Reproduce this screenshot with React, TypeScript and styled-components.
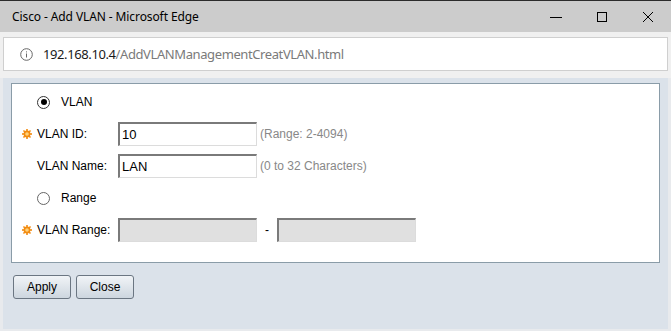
import React from 'react';
import styled, { createGlobalStyle } from 'styled-components';

const GlobalStyle = createGlobalStyle`
  html, body {
    margin: 0;
    padding: 0;
  }
  body {
    font-family: 'Liberation Sans', Arial, sans-serif;
  }
`;

const Star: React.FC = () => (
  <svg width="10" height="10" viewBox="0 0 10 10">
    <g fill="#f28c12">
      <circle cx="5" cy="5" r="3.4" />
      <rect x="4.2" y="0" width="1.6" height="10" />
      <rect x="0" y="4.2" width="10" height="1.6" />
      <rect x="4.2" y="0" width="1.6" height="10" transform="rotate(45 5 5)" />
      <rect x="4.2" y="0" width="1.6" height="10" transform="rotate(-45 5 5)" />
    </g>
    <circle cx="5" cy="5" r="1.8" fill="#ffd27a" />
  </svg>
);

const InfoIcon: React.FC = () => (
  <svg width="13" height="13" viewBox="0 0 13 13">
    <circle cx="6.5" cy="6.5" r="5.8" fill="none" stroke="#666" strokeWidth="1" />
    <rect x="6" y="5.5" width="1" height="4" fill="#666" />
    <rect x="6" y="3.4" width="1" height="1" fill="#666" />
  </svg>
);

const App: React.FC = () => (
  <Window>
    <GlobalStyle />
    <TitleBar>
      <Title>Cisco - Add VLAN - Microsoft Edge</Title>
      <Controls>
        <ControlButton>
          <svg width="12" height="12" viewBox="0 0 12 12">
            <rect x="0" y="6" width="12" height="1" fill="#000" />
          </svg>
        </ControlButton>
        <ControlButton>
          <svg width="12" height="12" viewBox="0 0 12 12">
            <rect x="1.5" y="1.5" width="9" height="9" fill="none" stroke="#000" strokeWidth="1" />
          </svg>
        </ControlButton>
        <ControlButton>
          <svg width="12" height="12" viewBox="0 0 12 12">
            <path d="M1 1 L11 11 M11 1 L1 11" stroke="#000" strokeWidth="1" />
          </svg>
        </ControlButton>
      </Controls>
    </TitleBar>

    <AddressArea>
      <AddressBox>
        <InfoIcon />
        <Url>
          192.168.10.4<UrlPath>/AddVLANManagementCreatVLAN.html</UrlPath>
        </Url>
      </AddressBox>
    </AddressArea>

    <Page>
      <Panel>
        <Row>
          <StarCell />
          <RadioLabel>
            <Radio checked />
            VLAN
          </RadioLabel>
        </Row>
        <Row>
          <StarCell>
            <Star />
          </StarCell>
          <Label>VLAN ID:</Label>
          <TextBox>10</TextBox>
          <Hint>(Range: 2-4094)</Hint>
        </Row>
        <Row>
          <StarCell />
          <Label>VLAN Name:</Label>
          <TextBox>LAN</TextBox>
          <Hint>(0 to 32 Characters)</Hint>
        </Row>
        <Row>
          <StarCell />
          <RadioLabel>
            <Radio />
            Range
          </RadioLabel>
        </Row>
        <Row>
          <StarCell>
            <Star />
          </StarCell>
          <Label>VLAN Range:</Label>
          <TextBox disabled />
          <Dash>-</Dash>
          <TextBox disabled />
        </Row>
      </Panel>

      <ButtonRow>
        <Button>Apply</Button>
        <Button>Close</Button>
      </ButtonRow>
    </Page>
  </Window>
);

export default App;

const Window = styled.div`
  width: 671px;
  height: 331px;
  display: flex;
  flex-direction: column;
  overflow: hidden;
`;

const TitleBar = styled.div`
  height: 31px;
  border-top: 1px solid #2b2b2b;
  background: #cccccc;
  display: flex;
  align-items: center;
  justify-content: space-between;
  padding-left: 12px;
`;

const Title = styled.span`
  font-family: 'Noto Sans', sans-serif;
  font-size: 12px;
  letter-spacing: -0.1px;
  color: #000;
`;

const Controls = styled.div`
  display: flex;
  height: 100%;
`;

const ControlButton = styled.div`
  width: 46px;
  display: flex;
  align-items: center;
  justify-content: center;
  padding-top: 1px;
`;

const AddressArea = styled.div`
  height: 46px;
  background: #f0f0f0;
  padding: 5px 3px 7px 3px;
  box-sizing: border-box;
`;

const AddressBox = styled.div`
  height: 100%;
  box-sizing: border-box;
  background: #fff;
  border: 1px solid #cfcfcf;
  display: flex;
  align-items: center;
  gap: 10px;
  padding-left: 16px;
`;

const Url = styled.span`
  font-family: 'Noto Sans', sans-serif;
  font-size: 13px;
  color: #1a1a1a;
  letter-spacing: -0.4px;
`;

const UrlPath = styled.span`
  color: #7a7a7a;
`;

const Page = styled.div`
  flex: 1;
  background: #dbe2ea;
  border-left: 3px solid #e8eaed;
  border-right: 3px solid #e8eaed;
  border-bottom: 2px solid #e8eaed;
  padding: 5px 0 0 8px;
`;

const Panel = styled.div`
  width: 649px;
  height: 180px;
  box-sizing: border-box;
  background: #fff;
  border: 1px solid #8a9ca8;
  padding: 2px 0 0 10px;
`;

const Row = styled.div`
  height: 32px;
  display: flex;
  align-items: center;
  font-size: 12px;
  color: #000;
`;

const StarCell = styled.div`
  width: 15px;
  display: flex;
  align-items: center;
`;

const Label = styled.span`
  width: 81px;
`;

const RadioLabel = styled.label`
  display: flex;
  align-items: center;
  gap: 11px;
`;

const Radio = styled.span<{ checked?: boolean }>`
  width: 13px;
  height: 13px;
  box-sizing: border-box;
  border-radius: 50%;
  border: 1px solid ${p => (p.checked ? '#333' : '#666')};
  background: #fff;
  position: relative;

  &::after {
    content: '';
    display: ${p => (p.checked ? 'block' : 'none')};
    position: absolute;
    left: 2.5px;
    top: 2.5px;
    width: 6px;
    height: 6px;
    border-radius: 50%;
    background: #000;
  }
`;

const TextBox = styled.div<{ disabled?: boolean }>`
  width: 139px;
  height: 24px;
  box-sizing: border-box;
  border-top: 2px solid #7a7a7a;
  border-left: 2px solid #7a7a7a;
  border-right: 1px solid #dcdcdc;
  border-bottom: 1px solid #dcdcdc;
  background: ${p => (p.disabled ? '#e0e0e0' : '#fff')};
  padding-left: 2px;
  display: flex;
  align-items: center;
  font-size: 13px;
  color: #000;
`;

const Hint = styled.span`
  margin-left: 3px;
  color: #888;
`;

const Dash = styled.span`
  width: 20px;
  text-align: center;
`;

const ButtonRow = styled.div`
  display: flex;
  gap: 5px;
  margin-top: 12px;
  padding-left: 2px;
`;

const Button = styled.button`
  width: 58px;
  height: 24px;
  border: 1px solid #6b7682;
  border-radius: 3px;
  background: linear-gradient(#f1f4f7, #cdd6df);
  font-family: 'Liberation Sans', Arial, sans-serif;
  font-size: 12px;
  color: #000;
  padding: 0;
`;
